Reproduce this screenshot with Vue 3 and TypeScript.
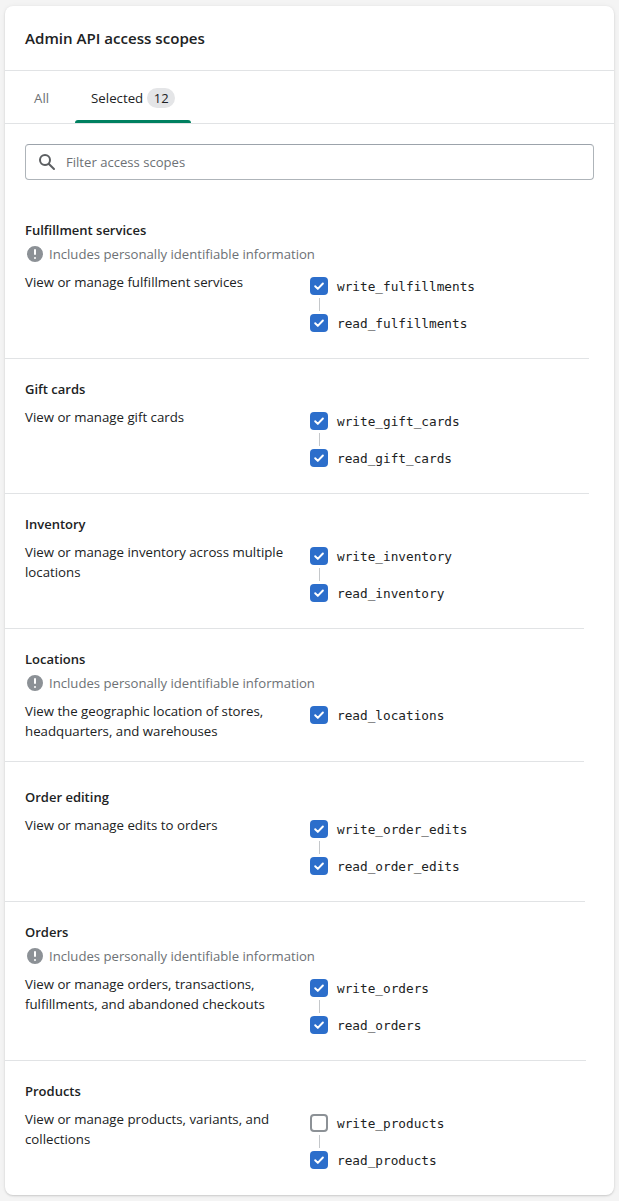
<script setup lang="ts">
interface Scope { name: string; checked: boolean }
interface Section {
  title: string
  pii: boolean
  lines: string[]
  scopes: Scope[]
  dividerRight: number
  extraTop: boolean
}
const s = (name: string, checked = true): Scope => ({ name, checked })
const sections: Section[] = [
  { title: 'Fulfillment services', pii: true, lines: ['View or manage fulfillment services'], scopes: [s('write_fulfillments'), s('read_fulfillments')], dividerRight: 25, extraTop: false },
  { title: 'Gift cards', pii: false, lines: ['View or manage gift cards'], scopes: [s('write_gift_cards'), s('read_gift_cards')], dividerRight: 25, extraTop: false },
  { title: 'Inventory', pii: false, lines: ['View or manage inventory across multiple', 'locations'], scopes: [s('write_inventory'), s('read_inventory')], dividerRight: 30, extraTop: false },
  { title: 'Locations', pii: true, lines: ['View the geographic location of stores,', 'headquarters, and warehouses'], scopes: [s('read_locations')], dividerRight: 30, extraTop: false },
  { title: 'Order editing', pii: false, lines: ['View or manage edits to orders'], scopes: [s('write_order_edits'), s('read_order_edits')], dividerRight: 29, extraTop: true },
  { title: 'Orders', pii: true, lines: ['View or manage orders, transactions,', 'fulfillments, and abandoned checkouts'], scopes: [s('write_orders'), s('read_orders')], dividerRight: 28, extraTop: false },
  { title: 'Products', pii: false, lines: ['View or manage products, variants, and', 'collections'], scopes: [s('write_products', false), s('read_products')], dividerRight: 0, extraTop: false },
]
</script>

<template>
  <main class="page">
    <section class="card">
      <header class="card-head"><h2>Admin API access scopes</h2></header>
      <nav class="tabs">
        <span class="tab">All</span>
        <span class="tab active">Selected <b class="badge">12</b></span>
      </nav>
      <div class="search-wrap">
        <label class="search">
          <svg viewBox="0 0 20 20" width="20" height="20" class="search-icon"><path fill="#5c5f62" d="M8 12a4 4 0 1 1 0-8 4 4 0 0 1 0 8zm9.707 4.293-4.82-4.82A5.968 5.968 0 0 0 14 8 6 6 0 0 0 2 8a6 6 0 0 0 6 6 5.968 5.968 0 0 0 3.473-1.113l4.82 4.82a.997.997 0 0 0 1.414 0 .999.999 0 0 0 0-1.414z"/></svg>
          <input class="search-input" placeholder="Filter access scopes" />
        </label>
      </div>
      <div class="list">
        <article v-for="sec in sections" :key="sec.title" class="group" :class="{ 'extra-top': sec.extraTop, last: !sec.dividerRight }">
          <h3>{{ sec.title }}</h3>
          <p v-if="sec.pii" class="pii">
            <svg viewBox="0 0 20 20" width="20" height="20"><path fill="#8c9196" fill-rule="evenodd" d="M10 18a8 8 0 1 0 0-16 8 8 0 0 0 0 16zM9 6a1 1 0 1 1 2 0v4a1 1 0 1 1-2 0V6zm2 8a1 1 0 1 1-2 0 1 1 0 0 1 2 0z"/></svg>
            <span>Includes personally identifiable information</span>
          </p>
          <div class="row">
            <p class="desc"><span v-for="l in sec.lines" :key="l" class="line">{{ l }}</span></p>
            <ul class="scopes">
              <li v-for="sc in sec.scopes" :key="sc.name" class="scope">
                <span class="box" :class="{ on: sc.checked }">
                  <svg v-if="sc.checked" viewBox="0 0 18 18" width="18" height="18"><path d="M5.2 9.3 7.8 11.9 12.9 6.5" fill="none" stroke="#fff" stroke-width="2" stroke-linecap="round" stroke-linejoin="round"/></svg>
                </span>
                <code>{{ sc.name }}</code>
              </li>
            </ul>
          </div>
          <div v-if="sec.dividerRight" class="rule" :style="{ marginRight: sec.dividerRight + 'px' }"></div>
        </article>
      </div>
    </section>
  </main>
</template>

<style>
html, body { margin: 0; background: #f4f4f4; }
</style>

<style scoped>
.page {
  padding: 6px 5px 6px;
  font-family: "Open Sans", "Noto Sans", sans-serif;
  font-size: 13.25px;
  line-height: 20px;
  color: #202223;
}
.card {
  background: #fff;
  border-radius: 8px;
  box-shadow: 0 0 5px rgba(23, 24, 24, 0.05), 0 1px 2px rgba(0, 0, 0, 0.15);
  overflow: hidden;
}
.card-head { height: 64px; border-bottom: 1px solid #e1e3e5; display: flex; align-items: center; padding-left: 20px; }
h2 { margin: 0; font-size: 15.1px; font-weight: 600; line-height: 24px; }
.tabs { display: flex; gap: 10px; height: 52px; padding-left: 12px; border-bottom: 1px solid #e1e3e5; }
.tab { padding: 2px 16px 0; display: flex; align-items: center; gap: 4px; color: #6d7175; height: 52px; box-sizing: border-box; }
.tab:first-child { padding-left: 17px; padding-right: 16px; }
.tab.active { color: #202223; position: relative; }
.tab.active::after { content: ""; position: absolute; left: 0; right: 0; bottom: 0; height: 3px; background: #008060; border-radius: 3px 3px 0 0; }
.badge { font-weight: 400; background: #e4e5e7; border-radius: 10px; font-size: 13px; line-height: 20px; height: 20px; width: 28px; text-align: center; display: block; }
.search-wrap { padding: 20px; }
.search { display: flex; align-items: center; height: 36px; box-sizing: border-box; border: 1px solid #aeb4b9; border-top-color: #9ca3ab; border-radius: 4px; padding-left: 11px; gap: 9px; }
.search-icon { flex: none; }
.search-input { flex: 1; border: 0; outline: 0; background: transparent; font: inherit; font-size: 13.1px; color: #202223; padding: 0; min-width: 0; }
.search-input::placeholder { color: #6d7175; opacity: 1; }
.group { padding-top: 20px; }
.group.extra-top { padding-top: 25px; }
.group.last { padding-bottom: 20px; }
h3 { margin: 0; font-size: 13px; font-weight: 600; line-height: 20px; padding-left: 20px; }
.pii { margin: 4px 0 0; padding-left: 20px; display: flex; align-items: center; gap: 4px; color: #6d7175; height: 20px; font-size: 13.15px; }
.pii svg { flex: none; }
.row { display: flex; margin-top: 8px; padding-left: 20px; }
.desc { margin: 0; width: 285px; flex: none; }
.line { display: block; white-space: nowrap; }
.scopes { list-style: none; margin: 0; padding: 5px 0 6px; display: flex; flex-direction: column; gap: 19px; }
.scope { display: flex; align-items: center; height: 18px; gap: 9px; position: relative; }
.scope + .scope::before { content: ""; position: absolute; left: 8.5px; top: -16px; width: 1px; height: 13px; background: #c4c7ca; }
.box { width: 18px; height: 18px; border-radius: 4px; box-sizing: border-box; display: block; flex: none; border: 2px solid #8c9196; background: #fff; }
.box.on { border: 0; background: #2c6ecb; }
.box svg { display: block; }
code { font-family: "DejaVu Sans Mono", monospace; font-size: 12.74px; line-height: 18px; color: #202223; margin-top: 2px; }
.rule { height: 1px; background: #e1e3e5; margin-top: 20px; }
</style>
